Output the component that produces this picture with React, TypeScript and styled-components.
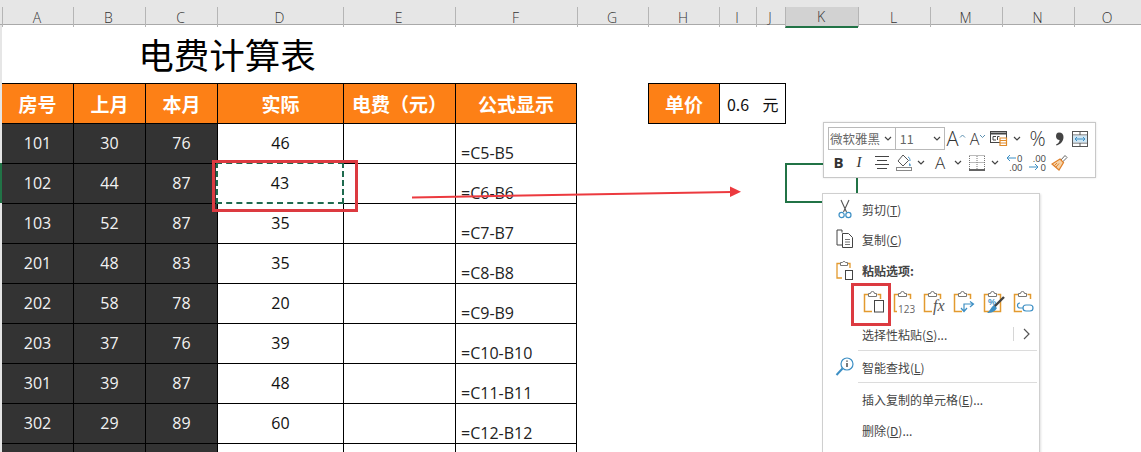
import React from 'react';
import styled, { createGlobalStyle } from 'styled-components';

const Global = createGlobalStyle`
  html, body { margin: 0; padding: 0; background: #fff; overflow: hidden; }
  * { box-sizing: border-box; }
`;

const COLS = '2px 71px 72px 72px 126px 112px 122px 71px 71px 37px 29px 73px 72px 72px 72px 67px';
const FONT = `"Open Sans", "Noto Sans CJK SC", sans-serif`;
const CJK = `"Noto Sans CJK SC", "Open Sans", sans-serif`;
const RED = '#dc3a40';
const GREEN = '#217346';

const Sheet = styled.div`
  position: relative;
  width: 1141px;
  height: 452px;
  overflow: hidden;
  background: #fff;
  font-family: ${FONT};
`;
const ColumnBar = styled.div`
  display: grid;
  grid-template-columns: ${COLS};
  height: 25px;
  padding-top: 7px;
  background: #e6e6e6;
  border-bottom: 1px solid #a9a9a9;
`;
const ColumnHead = styled.div<{ $active?: boolean }>`
  display: flex;
  align-items: center;
  justify-content: center;
  padding-right: 2px;
  font-size: 14px;
  font-weight: 300;
  color: #333;
  border-left: 1px solid #b5b5b5;
  margin-bottom: ${p => (p.$active ? '-1px' : '0')};
  background: ${p => (p.$active ? '#d2d2d2' : 'transparent')};
  border-bottom: ${p => (p.$active ? `2px solid ${GREEN}` : '0')};
`;
const Grid = styled.div`
  display: grid;
  grid-template-columns: ${COLS};
  grid-auto-rows: 40px;
  grid-template-rows: 58px;
`;
const RowGutter = styled.div<{ $active?: boolean; $row: number }>`
  grid-column: 1;
  grid-row: ${p => p.$row};
  background: ${p => (p.$active ? GREEN : '#e6e6e6')};
`;
const Title = styled.div`
  grid-column: 2 / 7;
  grid-row: 1;
  display: flex;
  align-items: center;
  justify-content: center;
  font-family: ${CJK};
  font-size: 35.5px;
  color: #000;
  padding: 0 3px 2px 0;
`;
const Cell = styled.div<{ $col: number; $row: number; $first?: boolean }>`
  grid-column: ${p => p.$col};
  grid-row: ${p => p.$row};
  display: flex;
  align-items: center;
  justify-content: center;
  border-left: ${p => (p.$first ? '0' : '1px solid #000')};
  border-top: 1px solid #000;
  font-size: 16px;
  color: #111;
`;
const HeadCell = styled(Cell)<{ $end?: boolean }>`
  background: #fd8016;
  color: #fff;
  font-family: ${CJK};
  font-weight: 700;
  font-size: 19px;
  white-space: nowrap;
  border-right: ${p => (p.$end ? '1px solid #000' : '0')};
  padding-bottom: 1px;
`;
const DarkCell = styled(Cell)`
  background: #333;
  color: #f2f2f2;
  padding-bottom: 1px;
`;
const ValueCell = styled(Cell)`
  background: #fff;
  padding-bottom: 1px;
`;
const CopiedCell = styled(ValueCell)`
  position: relative;
  z-index: 1;
  margin: -1px;
  border: 2px dashed #1f6a4e;
`;
const FormulaCell = styled(Cell)`
  justify-content: flex-start;
  align-items: flex-end;
  padding: 0 0 0 5px;
  border-right: 1px solid #000;
  line-height: 20px;
  color: #222;
`;
const PriceLabel = styled(HeadCell)`
  box-shadow: 0 1px 0 #000;
`;
const PriceValue = styled(Cell)<{ $last?: boolean }>`
  border-left: ${p => (p.$last ? '0' : '1px solid #000')};
  box-shadow: 0 1px 0 #000 ${p => (p.$last ? ', 1px 0 0 #000, 1px 1px 0 #000' : '')};
  font-family: ${CJK};
  font-size: 16px;
`;
const SelectedCell = styled.div<{ $col: number; $row: number }>`
  grid-column: ${p => p.$col};
  grid-row: ${p => p.$row};
  border: 2px solid ${GREEN};
`;
const RedBox = styled.div`
  position: absolute;
  z-index: 2;
  left: 212px;
  top: 160px;
  width: 146px;
  height: 52px;
  border: 3px solid ${RED};
`;
const ArrowLayer = styled.svg`
  position: absolute;
  left: 400px;
  top: 180px;
`;

/* Mini toolbar */
const MiniBar = styled.div`
  position: absolute;
  z-index: 3;
  left: 823px;
  top: 122px;
  width: 273px;
  height: 56px;
  padding: 4px 0 0 4px;
  background: #fff;
  border: 1px solid #c8c8c8;
  box-shadow: 0 0 2px rgba(0,0,0,.12);
  display: flex;
  flex-direction: column;
  gap: 1px;
`;
const MiniRow = styled.div`
  display: flex;
  align-items: center;
  height: 23px;
`;
const Combo = styled.div<{ $w: number }>`
  width: ${p => p.$w}px;
  height: 23px;
  border: 1px solid #b9b9b9;
  margin-right: -1px;
  display: flex;
  align-items: center;
  justify-content: space-between;
  padding: 0 3px 0 1px;
  font-family: ${CJK};
  font-size: 12.5px;
  color: #666;
  white-space: nowrap;
`;
const Slot = styled.div<{ $w: number }>`
  width: ${p => p.$w}px;
  height: 22px;
  flex: none;
  display: flex;
  align-items: center;
  justify-content: center;
  color: #444;
`;
const Glyph = styled.span<{ $size: number; $bold?: boolean; $italic?: boolean; $serif?: boolean }>`
  font-family: ${p => (p.$serif ? '"Liberation Serif", serif' : '"Open Sans", sans-serif')};
  font-size: ${p => p.$size}px;
  font-weight: ${p => (p.$bold ? 700 : 300)};
  font-style: ${p => (p.$italic ? 'italic' : 'normal')};
  color: #333;
  line-height: 1;
`;
const DecimalStack = styled.div`
  display: grid;
  grid-template-columns: 10px 7px;
  grid-template-rows: 9px 9px;
  font-size: 9.5px;
  line-height: 9px;
  color: #444;
  text-align: right;
  align-items: center;
`;
const WholeRow = styled.span`
  grid-column: 1 / 3;
`;

/* Context menu */
const Menu = styled.div`
  position: absolute;
  z-index: 2;
  left: 822px;
  top: 193px;
  width: 218px;
  height: 290px;
  padding: 0 1px;
  background: #fff;
  border: 1px solid #cfcfcf;
  box-shadow: 1px 1px 2px rgba(0,0,0,.12);
  font-family: ${CJK};
  font-size: 12px;
  color: #444;
`;
const MenuItem = styled.div<{ $h?: number }>`
  height: ${p => p.$h ?? 30}px;
  display: flex;
  align-items: center;
`;
const MenuIcon = styled.div`
  width: 38px;
  flex: none;
  display: flex;
  justify-content: center;
  padding-left: 3px;
`;
const MenuLabel = styled.span<{ $bold?: boolean }>`
  font-weight: ${p => (p.$bold ? 700 : 400)};
  white-space: nowrap;
  flex: 1;
  u { text-underline-offset: 1px; }
`;
const SubArrow = styled.div`
  width: 25px;
  height: 14px;
  border-left: 1px solid #d6d6d6;
  display: flex;
  align-items: center;
  justify-content: center;
`;
const Separator = styled.div<{ $tight?: boolean }>`
  height: 1px;
  margin: ${p => (p.$tight ? '0' : '1px')} 1px 1px 34px;
  background: #dcdcdc;
`;
const PasteRow = styled.div`
  height: 33px;
  padding: 3px 0 0 39px;
  display: flex;
  align-items: flex-start;
  gap: 8px;
`;
const PasteBox = styled.div`
  position: absolute;
  z-index: 3;
  left: 851px;
  top: 283px;
  width: 40px;
  height: 43px;
  border: 3px solid ${RED};
`;

const ORANGE = '#e39a2f';
const BLUE = '#3d8fc4';

const Board: React.FC<{ children?: React.ReactNode; end?: number; closed?: boolean }> = ({ children, end = 9, closed }) => (
  <svg width="22" height="28" viewBox="0 0 22 28" fill="none">
    <path
      d={closed ? 'M5.5 5.5H1.5V22.5H17.5V5.5H14.5' : `M5.5 5.5H1.5V22.5H${end}M14.5 5.5H17.5V10`}
      stroke={ORANGE}
      strokeWidth="1.5"
    />
    <path d="M5.5 7.5V4.5H7.5A2 2 0 0 1 11.5 4.5H13.5V7.5Z" stroke="#777" fill="#fff" />
    {children}
  </svg>
);

const Scissors = () => (
  <svg width="14" height="20" viewBox="0 0 14 20" fill="none">
    <path d="M3 1L8.5 13M11 1L5.5 13" stroke="#555" strokeWidth="1.1" />
    <circle cx="3.6" cy="16" r="2.6" stroke={BLUE} strokeWidth="1.2" />
    <circle cx="10.4" cy="16" r="2.6" stroke={BLUE} strokeWidth="1.2" />
  </svg>
);
const CopyIcon = () => (
  <svg width="18" height="20" viewBox="0 0 18 20" fill="none" stroke="#444">
    <path d="M6 3.5V1H1V16H6" />
    <path d="M6.5 4.5H12.5L16.5 8.5V18.5H6.5Z" fill="#fff" />
    <path d="M9 10.5H14M9 13H14M9 15.5H14" stroke="#777" />
  </svg>
);
const PasteSmall = () => (
  <svg width="18" height="21" viewBox="0 0 18 21" fill="none">
    <path d="M4.5 3.5H1V18H6M11.5 3.5H14V8" stroke={ORANGE} strokeWidth="1.3" />
    <path d="M4.5 5.5V2.5H6.5A1.6 1.6 0 0 1 9.5 2.5H11.5V5.5Z" stroke="#777" />
    <rect x="9.5" y="10.5" width="7" height="9" stroke="#444" />
  </svg>
);
const SmartLookup = () => (
  <svg width="20" height="20" viewBox="0 0 20 20" fill="none">
    <circle cx="12" cy="7" r="6" stroke={BLUE} strokeWidth="1.2" />
    <path d="M7.5 11.5L1.5 18" stroke={BLUE} strokeWidth="2" />
    <path d="M12 6V10M12 3.5V4.8" stroke="#333" strokeWidth="1.3" />
  </svg>
);
const Chevron = ({ color = '#444' }: { color?: string }) => (
  <svg width="8" height="5" viewBox="0 0 8 5" fill="none">
    <path d="M1 1L4 4L7 1" stroke={color} strokeWidth="1.2" />
  </svg>
);
const ChevronRight = () => (
  <svg width="7" height="12" viewBox="0 0 7 12" fill="none">
    <path d="M1 1L6 6L1 11" stroke="#555" strokeWidth="1.2" />
  </svg>
);
const Caret = ({ down }: { down?: boolean }) => (
  <svg width="7" height="12" viewBox="0 0 7 12" fill="none">
    <path d={down ? 'M1 2L3.5 4.5L6 2' : 'M1 4.5L3.5 2L6 4.5'} stroke="#5a8fb0" />
  </svg>
);
const CellStyles = () => (
  <svg width="18" height="17" viewBox="0 0 18 17" fill="none">
    <rect x="0.5" y="1.5" width="16" height="11" stroke="#444" />
    <path d="M0.5 3.5H16.5" stroke="#444" strokeWidth="2" />
    <path d="M6 6.5H3V10H6M7.5 10V6.5H9.5" stroke="#444" />
    <path d="M10 8H16.5V15.5H10Z" fill="#fff" stroke="#e08a2a" strokeWidth="1.2" />
    <path d="M10 10.5H16.5M10 13H16.5" stroke="#e08a2a" />
  </svg>
);
const CommaIcon = () => (
  <svg width="9" height="14" viewBox="0 0 9 14">
    <path d="M4 0.5C7 0.5 8.5 2.5 8.5 5C8.5 9 5.5 12.5 1.5 13.5L1 12.5C3 11.5 4.5 10 4.6 8C2.5 8 1 6.5 1 4.2C1 2 2 0.5 4 0.5Z" fill="#444" />
  </svg>
);
const WrapIcon = () => (
  <svg width="16" height="16" viewBox="0 0 16 16" fill="none">
    <rect x="0.5" y="0.5" width="15" height="15" stroke="#555" />
    <path d="M0.5 4H15.5M0.5 12H15.5M8 0.5V4M8 12V15.5" stroke="#555" />
    <rect x="1" y="4.5" width="14" height="7" fill="#cfe6f4" />
    <path d="M3 8H13M5 6L3 8L5 10M11 6L13 8L11 10" stroke={BLUE} />
  </svg>
);
const AlignIcon = () => (
  <svg width="14" height="13" viewBox="0 0 14 13" fill="none" stroke="#444">
    <path d="M0 0.5H14M2 4.5H12M0 8.5H14M2 12.5H12" />
  </svg>
);
const FillIcon = () => (
  <svg width="17" height="17" viewBox="0 0 17 17" fill="none">
    <path d="M7 1L12.5 6.5L7 12L2 7Z" stroke="#555" />
    <path d="M13.5 9C14.5 10.2 15 11 14.5 12C13.5 12.5 12.5 11.5 13.5 9Z" fill={BLUE} />
    <path d="M12 3C13.5 3.5 14 5 14 7" stroke={BLUE} />
    <rect x="0.5" y="13.5" width="15" height="3" stroke="#888" />
  </svg>
);
const BorderIcon = () => (
  <svg width="16" height="16" viewBox="0 0 16 16" fill="none">
    <path d="M0.5 1V14M15.5 1V14M0.5 0.5H15.5M0.5 7.5H15.5M8 1V14" stroke="#777" strokeDasharray="1 1" />
    <path d="M0 15H16" stroke="#222" strokeWidth="1.4" />
  </svg>
);
const ArrowLeft = () => (
  <svg width="10" height="8" viewBox="0 0 10 8" fill="none">
    <path d="M10 4H1M4 1L1 4L4 7" stroke={BLUE} />
  </svg>
);
const ArrowRight = () => (
  <svg width="10" height="8" viewBox="0 0 10 8" fill="none">
    <path d="M0 4H9M6 1L9 4L6 7" stroke={BLUE} />
  </svg>
);
const Brush = () => (
  <svg width="17" height="17" viewBox="0 0 17 17" fill="none">
    <path d="M9.5 6.5L14 1.5L16 3.5L11.5 8" stroke="#666" />
    <path d="M9 5L12.5 8.5L8 16L1 10Z" fill="#f6d3a8" stroke="#e0802a" strokeWidth="1.2" />
    <path d="M5 13L8 9.5M3.5 11.5L6 9" stroke="#e0802a" />
  </svg>
);

const COLUMNS = ['A', 'B', 'C', 'D', 'E', 'F', 'G', 'H', 'I', 'J', 'K', 'L', 'M', 'N', 'O'];
const HEADERS = ['房号', '上月', '本月', '实际', '电费（元）', '公式显示'];
const DATA: [string, string, string, string, string][] = [
  ['101', '30', '76', '46', '=C5-B5'],
  ['102', '44', '87', '43', '=C6-B6'],
  ['103', '52', '87', '35', '=C7-B7'],
  ['201', '48', '83', '35', '=C8-B8'],
  ['202', '58', '78', '20', '=C9-B9'],
  ['203', '37', '76', '39', '=C10-B10'],
  ['301', '39', '87', '48', '=C11-B11'],
  ['302', '29', '89', '60', '=C12-B12'],
  ['', '', '', '', ''],
];

export default function App() {
  return (
    <Sheet>
      <Global />
      <ColumnBar>
        <div />
        {COLUMNS.map(c => (
          <ColumnHead key={c} $active={c === 'K'}>{c}</ColumnHead>
        ))}
      </ColumnBar>
      <Grid>
        <RowGutter $row={1} />
        <Title>电费计算表</Title>
        <RowGutter $row={2} />
        {HEADERS.map((h, i) => (
          <HeadCell key={h} $col={i + 2} $row={2} $end={i === 5} $first={i === 0}>{h}</HeadCell>
        ))}
        <PriceLabel $col={9} $row={2}>单价</PriceLabel>
        <PriceValue $col={10} $row={2}>0.6</PriceValue>
        <PriceValue $col={11} $row={2} $last>元</PriceValue>
        {DATA.map((r, i) => {
          const row = i + 3;
          return (
            <React.Fragment key={row}>
              <RowGutter $row={row} $active={i === 1} />
              <DarkCell $col={2} $row={row} $first>{r[0]}</DarkCell>
              <DarkCell $col={3} $row={row}>{r[1]}</DarkCell>
              <DarkCell $col={4} $row={row}>{r[2]}</DarkCell>
              {i === 1
                ? <CopiedCell $col={5} $row={row}>{r[3]}</CopiedCell>
                : <ValueCell $col={5} $row={row}>{r[3]}</ValueCell>}
              <ValueCell $col={6} $row={row} />
              <FormulaCell $col={7} $row={row}>{r[4]}</FormulaCell>
            </React.Fragment>
          );
        })}
        <SelectedCell $col={12} $row={4} />
      </Grid>

      <RedBox />
      <ArrowLayer width="345" height="25" viewBox="0 0 345 25">
        <path d="M12 17.5L332 12" stroke="#ec3a3f" strokeWidth="2" />
        <path d="M341 11.8L330 6.5V17Z" fill="#ec3a3f" />
      </ArrowLayer>

      <Menu>
        <MenuItem><MenuIcon><Scissors /></MenuIcon><MenuLabel>剪切(<u>T</u>)</MenuLabel></MenuItem>
        <MenuItem><MenuIcon><CopyIcon /></MenuIcon><MenuLabel>复制(<u>C</u>)</MenuLabel></MenuItem>
        <MenuItem $h={32}><MenuIcon><PasteSmall /></MenuIcon><MenuLabel $bold>粘贴选项:</MenuLabel></MenuItem>
        <PasteRow>
          <Board><rect x="11.5" y="11.5" width="9" height="11.5" stroke="#444" /></Board>
          <Board end={4}>
            <text x="5" y="23.5" fontSize="10" fontFamily="Open Sans, sans-serif" fill="#666">123</text>
          </Board>
          <Board>
            <text x="10" y="22" fontSize="16" fontStyle="italic" fontFamily="Liberation Serif, serif" fill="#555">fx</text>
          </Board>
          <Board>
            <path d="M11 22V15H20M17 12.5L20.5 15L17 18M8 19L11 22.5L14 19" stroke={BLUE} strokeWidth="1.2" />
          </Board>
          <Board closed>
            <text x="5" y="16" fontSize="9" fontWeight="700" fontFamily="Liberation Sans, sans-serif" fill={BLUE}>%</text>
            <path d="M21 8L11 18" stroke="#444" strokeWidth="2.4" />
            <path d="M11 16L14 19C12 23 8 24 4 24C7 22 8 18 11 16Z" fill={BLUE} />
          </Board>
          <Board>
            <path d="M13 16H17A3 3 0 0 1 17 22H13A3 3 0 0 1 13 16Z" stroke={BLUE} strokeWidth="1.2" />
            <path d="M10 19H7A2.5 2.5 0 0 1 7 14" stroke={BLUE} strokeWidth="1.2" />
          </Board>
        </PasteRow>
        <MenuItem>
          <MenuIcon />
          <MenuLabel>选择性粘贴(<u>S</u>)...</MenuLabel>
          <SubArrow><ChevronRight /></SubArrow>
        </MenuItem>
        <Separator />
        <MenuItem><MenuIcon><SmartLookup /></MenuIcon><MenuLabel>智能查找(<u>L</u>)</MenuLabel></MenuItem>
        <Separator $tight />
        <MenuItem><MenuIcon /><MenuLabel>插入复制的单元格(<u>E</u>)...</MenuLabel></MenuItem>
        <MenuItem $h={32}><MenuIcon /><MenuLabel>删除(<u>D</u>)...</MenuLabel></MenuItem>
      </Menu>
      <PasteBox />

      <MiniBar>
        <MiniRow>
          <Combo $w={68}>微软雅黑<Chevron /></Combo>
          <Combo $w={50}>&nbsp;11<Chevron /></Combo>
          <Slot $w={24}><Glyph $size={20}>A</Glyph><Caret /></Slot>
          <Slot $w={20}><Glyph $size={16}>A</Glyph><Caret down /></Slot>
          <Slot $w={22}><CellStyles /></Slot>
          <Slot $w={14}><Chevron /></Slot>
          <Slot $w={27}><Glyph $size={20}>%</Glyph></Slot>
          <Slot $w={16}><CommaIcon /></Slot>
          <Slot $w={25}><WrapIcon /></Slot>
        </MiniRow>
        <MiniRow>
          <Slot $w={21}><Glyph $size={15} $bold>B</Glyph></Slot>
          <Slot $w={20}><Glyph $size={15} $italic $serif>I</Glyph></Slot>
          <Slot $w={25}><AlignIcon /></Slot>
          <Slot $w={20}><FillIcon /></Slot>
          <Slot $w={14}><Chevron /></Slot>
          <Slot $w={24}><Glyph $size={17}>A</Glyph></Slot>
          <Slot $w={12}><Chevron /></Slot>
          <Slot $w={25}><BorderIcon /></Slot>
          <Slot $w={12}><Chevron /></Slot>
          <Slot $w={26}>
            <DecimalStack>
              <ArrowLeft /><span>0</span>
              <WholeRow>.00</WholeRow>
            </DecimalStack>
          </Slot>
          <Slot $w={21}>
            <DecimalStack>
              <WholeRow>.00</WholeRow>
              <ArrowRight /><span>0</span>
            </DecimalStack>
          </Slot>
          <Slot $w={22}><Brush /></Slot>
        </MiniRow>
      </MiniBar>
    </Sheet>
  );
}
